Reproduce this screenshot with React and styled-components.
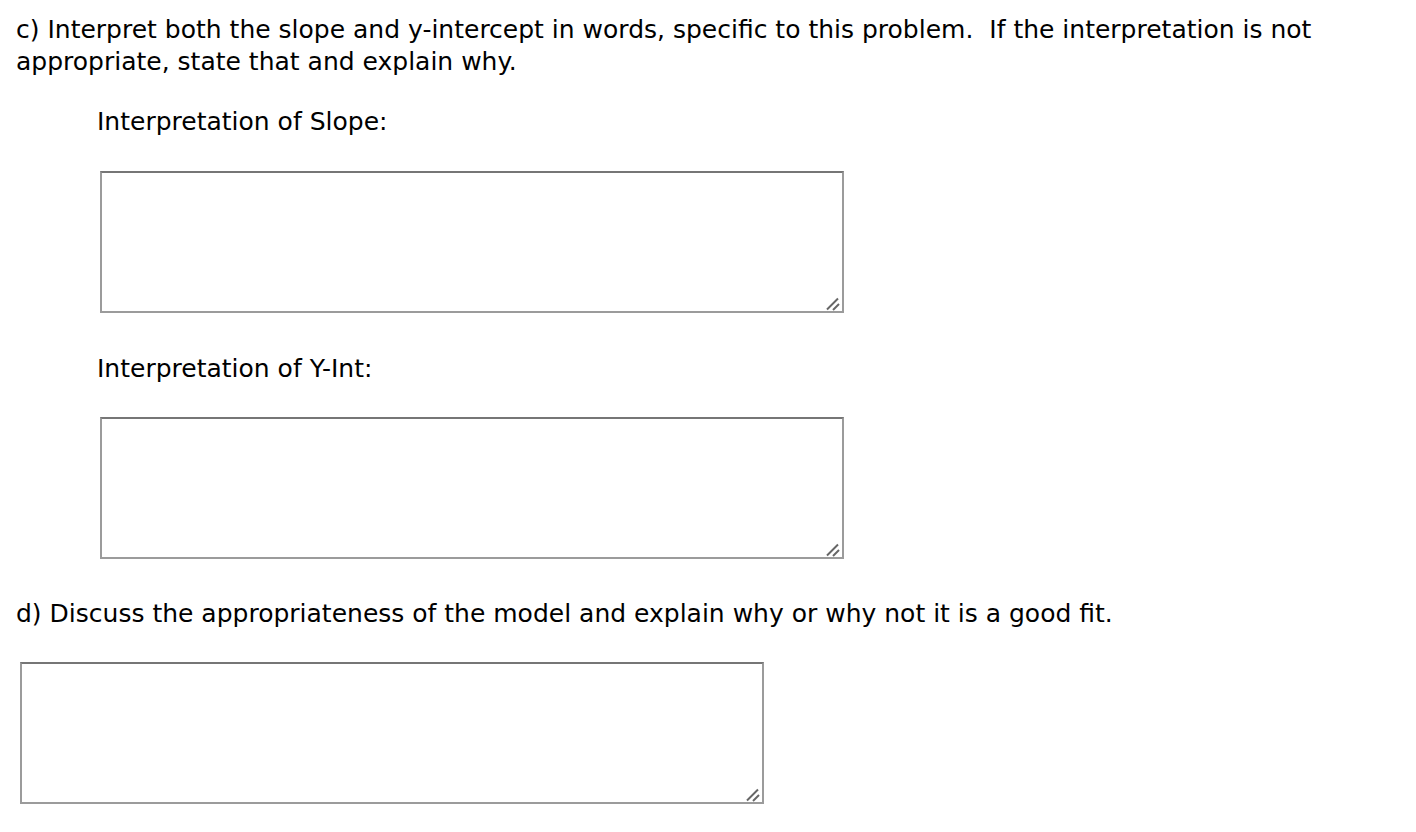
import React from "react";
import styled, { createGlobalStyle } from "styled-components";

const GlobalStyle = createGlobalStyle`
  html, body {
    margin: 0;
    padding: 0;
    background: #ffffff;
  }
  body {
    font-family: "DejaVu Sans", Verdana, sans-serif;
    color: #000000;
  }
`;

const Page = styled.div`
  padding: 14px 16px 0px;
  font-size: 25px;
`;

const Prompt = styled.p`
  margin: 0;
  line-height: 32px;
  width: 1380px;
`;

const Field = styled.div`
  display: flex;
  flex-direction: column;
  align-items: flex-start;
  padding-left: ${(props) => props.indent || 0}px;
  margin-top: ${(props) => props.top || 0}px;
`;

const Label = styled.div`
  line-height: 32px;
  margin-bottom: ${(props) => props.gap || 33}px;
  white-space: nowrap;
`;

const BoxWrap = styled.div`
  position: relative;
  margin-left: ${(props) => props.shift || 0}px;
`;

const AnswerBox = styled.textarea`
  display: block;
  box-sizing: border-box;
  width: 744px;
  height: 142px;
  border: 2px solid #9b9b9b;
  border-top-color: #767676;
  border-radius: 0;
  background: #ffffff;
  padding: 4px;
  font-family: "DejaVu Sans", Verdana, sans-serif;
  font-size: 16px;
  outline: none;
  resize: none;
`;

const Grip = styled.svg`
  position: absolute;
  right: 4px;
  bottom: 2px;
  width: 14px;
  height: 14px;
  pointer-events: none;
`;

const Answer = ({ shift }) => (
  <BoxWrap shift={shift}>
    <AnswerBox />
    <Grip viewBox="0 0 14 14">
      <line x1="1" y1="12.5" x2="12" y2="1.5" stroke="#666666" strokeWidth="2" />
      <line x1="7" y1="13" x2="13" y2="7" stroke="#666666" strokeWidth="2" />
    </Grip>
  </BoxWrap>
);

const App = () => {
  return (
    <Page>
      <GlobalStyle />
      <Prompt>
        c) Interpret both the slope and y-intercept in words, specific to this
        problem.&nbsp; If the interpretation is not appropriate, state that
        and explain why.
      </Prompt>
      <Field indent={81} top={28}>
        <Label>Interpretation of Slope:</Label>
        <Answer shift={3} />
      </Field>
      <Field indent={81} top={40}>
        <Label gap={32}>Interpretation of Y-Int:</Label>
        <Answer shift={3} />
      </Field>
      <Field top={39}>
        <Label gap={32}>d) Discuss the appropriateness of the model and explain why or why not it is a good fit.</Label>
        <Answer shift={4} />
      </Field>
    </Page>
  );
};

export default App;
